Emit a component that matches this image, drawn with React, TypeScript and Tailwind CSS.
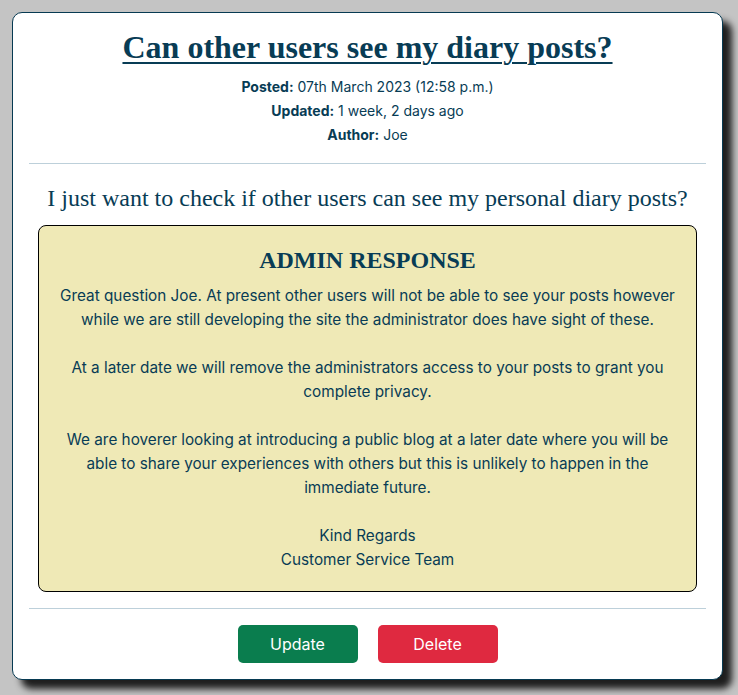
import React from 'react';

const App: React.FC = () => {
  return (
    <div className="min-h-screen w-full bg-[#c4c4c4] pt-3 pl-3 pr-[15px] pb-4 text-[#083c55]" style={{ fontFamily: 'Inter, "Noto Sans", sans-serif' }}>
      <div className="bg-white border border-[#073a52] rounded-[10px] shadow-[9px_9px_7px_rgba(0,0,0,0.85)] px-4 pt-[14px] pb-4">
        {/* Heading + meta */}
        <h1 className="text-center font-bold text-[32px] leading-[40px] underline decoration-[2px] underline-offset-[4px]" style={{ fontFamily: '"Liberation Serif", serif' }}>
          Can other users see my diary posts?
        </h1>
        <div className="mt-[8px] text-center text-[14px] leading-[24px]">
          <p><span className="font-bold">Posted:</span> 07th March 2023 (12:58 p.m.)</p>
          <p><span className="font-bold">Updated:</span> 1 week, 2 days ago</p>
          <p><span className="font-bold">Author:</span> Joe</p>
        </div>

        <hr className="mt-4 border-t border-[#bdd0da]" />

        <p className="mt-[18px] text-center text-[24px] leading-[32px]" style={{ fontFamily: '"Liberation Serif", serif' }}>
          I just want to check if other users can see my personal diary posts?
        </p>

        {/* Admin response */}
        <div className="mx-[9px] mt-[11px] bg-[#efe9b6] border border-black rounded-[8px] px-5 pt-[18px] pb-[19px] text-center text-[15.3px] leading-[24px]">
          <h2 className="font-bold text-[24px] leading-[32px] mb-[8px]" style={{ fontFamily: '"Liberation Serif", serif' }}>
            ADMIN RESPONSE
          </h2>
          <p className="mb-6">
            Great question Joe. At present other users will not be able to see your posts however while we are still developing the site the administrator does have sight of these.
          </p>
          <p className="mb-6">
            At a later date we will remove the administrators access to your posts to grant you complete privacy.
          </p>
          <p className="mb-6">
            We are hoverer looking at introducing a public blog at a later date where you will be able to share your experiences with others but this is unlikely to happen in the immediate future.
          </p>
          <p>
            Kind Regards
            <br />
            Customer Service Team
          </p>
        </div>

        <hr className="mt-4 border-t border-[#bdd0da]" />

        {/* Actions */}
        <div className="mt-4 flex justify-center gap-5">
          <button className="w-[120px] h-[38px] rounded-[5px] bg-[#0a7d4e] text-white text-[16px]">Update</button>
          <button className="w-[120px] h-[38px] rounded-[5px] bg-[#df2940] text-white text-[16px]">Delete</button>
        </div>
      </div>
    </div>
  );
};

export default App;
